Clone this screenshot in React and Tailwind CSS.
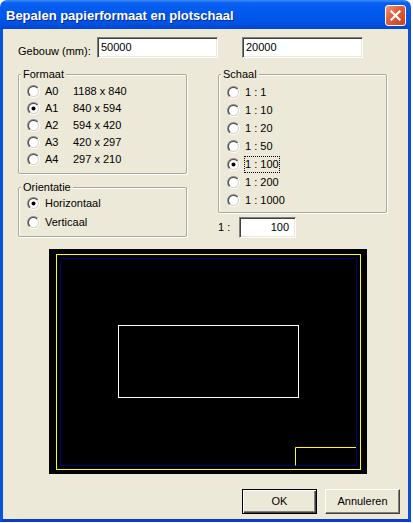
import React from 'react';

function Radio({ checked }) {
  return (
    <svg width="13" height="13" viewBox="0 0 13 13" className="shrink-0">
      <defs>
        <linearGradient id="radioOuter" x1="0" y1="0" x2="1" y2="1">
          <stop offset="0.5" stopColor="#8d8d8d" />
          <stop offset="0.5" stopColor="#ffffff" />
        </linearGradient>
        <linearGradient id="radioInner" x1="0" y1="0" x2="1" y2="1">
          <stop offset="0.5" stopColor="#4a4a4a" />
          <stop offset="0.5" stopColor="#d4d0c8" />
        </linearGradient>
      </defs>
      <circle cx="6.5" cy="6.5" r="6.5" fill="url(#radioOuter)" />
      <circle cx="6.5" cy="6.5" r="5.5" fill="url(#radioInner)" />
      <circle cx="6.5" cy="6.5" r="4.5" fill="#ffffff" />
      {checked && <circle cx="6.5" cy="6.5" r="2" fill="#000000" />}
    </svg>
  );
}

function Field({ value, className, right }) {
  return (
    <div
      className={
        'flex items-center h-[21px] bg-white border border-t-[#808080] border-l-[#808080] border-b-white border-r-white shadow-[inset_1px_1px_0_#404040,inset_-1px_-1px_0_#ece9d8] leading-[13px] ' +
        (right ? 'justify-end pr-[6px] ' : 'pl-[3px] ') +
        className
      }
    >
      {value}
    </div>
  );
}

function Group({ title, className, children }) {
  return (
    <fieldset
      className={
        'border border-[#aca899] rounded-[2px] pl-[2px] shadow-[1px_1px_0_#ffffff,inset_1px_1px_0_#ffffff] ' +
        className
      }
    >
      <legend className="px-[2px] leading-[14px] bg-[#ece9d8]">{title}</legend>
      {children}
    </fieldset>
  );
}

function Option({ checked, focus, label, extra, height }) {
  return (
    <div className={'flex items-center ml-[6px] ' + height}>
      <Radio checked={checked} />
      <span
        className={
          'ml-[4px] leading-[15px] border ' +
          (focus ? 'border-dotted border-black' : 'border-transparent') +
          (extra ? ' w-[29px]' : '')
        }
      >
        {label}
      </span>
      {extra && <span className="leading-[15px]">{extra}</span>}
    </div>
  );
}

const formats = [
  ['A0', '1188 x 840'],
  ['A1', '840 x 594'],
  ['A2', '594 x 420'],
  ['A3', '420 x 297'],
  ['A4', '297 x 210'],
];

const scales = ['1 : 1', '1 : 10', '1 : 20', '1 : 50', '1 : 100', '1 : 200', '1 : 1000'];

export default function App() {
  return (
    <div className="w-[413px] h-[523px] bg-white overflow-hidden font-['Liberation_Sans',Arial,sans-serif] text-[11px] text-black">
      <div className="w-[411px] h-[522px] flex flex-col rounded-t-[7px] overflow-hidden">
        {/* Title bar */}
        <div className="h-[29px] shrink-0 flex items-start justify-between pl-[6px] pr-[5px] bg-[linear-gradient(to_bottom,#3d8ef8_0%,#0b60f0_10%,#0058ee_45%,#0054e6_75%,#0047d6_100%)]">
          <span className="pt-[8px] text-[13px] leading-[15px] font-bold text-white [text-shadow:1px_1px_0_#0c2a8a]">
            Bepalen papierformaat en plotschaal
          </span>
          <div className="mt-[5px] w-[21px] h-[21px] rounded-[3px] border border-white bg-[linear-gradient(135deg,#ec9a80_0%,#e0603f_40%,#c8401f_100%)] flex items-center justify-center">
            <svg width="11" height="11" viewBox="0 0 11 11">
              <path d="M1.5 1.5 L9.5 9.5 M9.5 1.5 L1.5 9.5" stroke="#ffffff" strokeWidth="2.2" strokeLinecap="square" />
            </svg>
          </div>
        </div>

        {/* Body */}
        <div className="flex-1 flex flex-col bg-[#ece9d8] border-l-[3px] border-r-[3px] border-b-[3px] border-l-[#0855dd] border-r-[#0850d8] border-b-[#0a3ad0]">
          <div className="flex items-start pt-[8px] pl-[15px]">
            <span className="w-[79px] mt-[8px] leading-[13px]">Gebouw (mm):</span>
            <Field value="50000" className="w-[121px]" />
            <Field value="20000" className="w-[121px] ml-[24px]" />
          </div>

          <div className="flex items-start mt-[9px] pl-[15px] gap-[31px]">
            <div className="flex flex-col w-[169px]">
              <Group title="Formaat" className="h-[107px] pt-[2px]">
                {formats.map(([a, s], i) => (
                  <Option key={a} checked={i === 1} label={a} extra={s} height="h-[17px]" />
                ))}
              </Group>
              <Group title="Orientatie" className="h-[57px] mt-[6px]">
                <Option checked label="Horizontaal" height="h-[19px]" />
                <Option label="Verticaal" height="h-[19px]" />
              </Group>
            </div>
            <div className="flex flex-col w-[169px]">
              <Group title="Schaal" className="h-[146px] pt-[2px]">
                {scales.map((s) => (
                  <Option key={s} checked={s === '1 : 100'} focus={s === '1 : 100'} label={s} height="h-[18px]" />
                ))}
              </Group>
              <div className="flex items-center mt-[4px]">
                <span className="w-[21px]">1 :</span>
                <Field value="100" right className="w-[57px]" />
              </div>
            </div>
          </div>

          {/* Preview */}
          <div className="mt-[11px] ml-[46px] w-[318px] h-[225px] bg-black">
            <svg width="318" height="225" viewBox="0 0 318 225">
              <rect x="7.5" y="5.5" width="304" height="215" fill="none" stroke="#ffff00" />
              <rect x="11.5" y="9.5" width="296" height="207" fill="none" stroke="#000080" />
              <rect x="69.5" y="76.5" width="180" height="72" fill="none" stroke="#ffffff" />
              <path d="M246.5 216.5 V198.5 H307" fill="none" stroke="#ffff00" />
            </svg>
          </div>

          {/* Buttons */}
          <div className="flex justify-end gap-[8px] pr-[8px] mt-[15px]">
            <button className="w-[75px] h-[25px] bg-[#ece9d8] border border-black shadow-[inset_1px_1px_0_#ffffff,inset_-1px_-1px_0_#404040,inset_-2px_-2px_0_#808080] text-[11px]">
              OK
            </button>
            <button className="w-[75px] h-[25px] bg-[#ece9d8] border border-t-white border-l-white border-r-[#404040] border-b-[#404040] shadow-[inset_-1px_-1px_0_#808080] text-[11px]">
              Annuleren
            </button>
          </div>
        </div>
      </div>
    </div>
  );
}
